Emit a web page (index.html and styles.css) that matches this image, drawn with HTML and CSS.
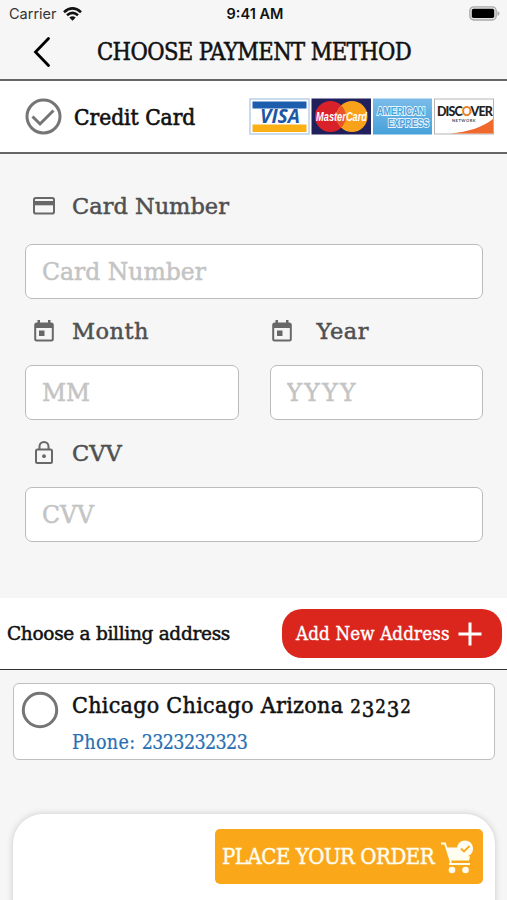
FILE: index.html
```html
<!DOCTYPE html>
<html lang="en">
<head>
<meta charset="utf-8">
<title>Choose Payment Method</title>
<link rel="stylesheet" href="styles.css">
</head>
<body>
<div class="screen">
  <div class="status">
    <div class="carrier"><span>Carrier</span>
      <svg width="19" height="14" viewBox="0 0 19 14" fill="none" stroke="#111" stroke-width="2.6"><path d="M1 5.2Q9.500-2.300 18 5.200M4 8.300Q9.500 3.600 15 8.300"/><path d="M6.300 10.500Q9.500 8 12.700 10.500L9.500 13.700z" fill="#111" stroke="none"/></svg>
    </div>
    <span class="time">9:41 AM</span>
    <svg class="battery" width="31" height="15" viewBox="0 0 31 15"><rect x=".8" y=".8" width="26.400" height="13.200" rx="4" fill="#e4e4e4" stroke="#aaa" stroke-width="1.300"/><rect x="2.800" y="2.800" width="22.400" height="9.200" rx="1.800" fill="#000"/><path d="M28.500 5v5q2-1 2-2.500t-2-2.500z" fill="#aaa"/></svg>
  </div>
  <header class="header">
    <svg class="back" width="18" height="32" viewBox="0 0 18 32" fill="none" stroke="#000" stroke-width="2.800"><path d="M15.500 2.500L2.500 16L15.500 29.500" stroke-linecap="round"/></svg>
    <h1>CHOOSE PAYMENT METHOD</h1>
  </header>
  <section class="method">
    <svg class="check" width="37" height="37" viewBox="0 0 37 37" fill="none" stroke="#757575" stroke-width="3"><circle cx="18.500" cy="18.500" r="16.500"/><path d="M7.500 18.500L15 26L28.500 12.500"/></svg>
    <span class="method-name">Credit Card</span>
    <svg class="cards" width="246" height="38" viewBox="0 0 246 38">
      <rect x="1" y="1" width="59" height="35" fill="#fff" stroke="#b9cfe8" stroke-width="1.500"/>
      <rect x="3.500" y="3.500" width="54" height="7" fill="#1d5dad"/><rect x="3.500" y="26.500" width="54" height="7.500" fill="#fbb116"/>
      <text x="11" y="25" class="visa" textLength="40" lengthAdjust="spacingAndGlyphs">VISA</text>
      <rect x="62.500" y=".5" width="59.500" height="36" fill="#20205c"/>
      <circle cx="81.500" cy="18.500" r="15.500" fill="#d9212a"/><circle cx="103" cy="18.500" r="15.500" fill="#f9a11b"/>
      <path d="M92.300 7.500a15.500 15.500 0 0 1 0 22a15.500 15.500 0 0 1 0-22" fill="#e9552a"/>
      <text x="67" y="23" class="master" textLength="51" lengthAdjust="spacingAndGlyphs">MasterCard</text>
      <defs><linearGradient id="sky" x2="0" y2="1"><stop stop-color="#7abce9"/><stop offset="1" stop-color="#46a1d9"/></linearGradient></defs>
      <rect x="124" y=".5" width="59" height="36" fill="url(#sky)"/>
      <text x="128" y="17" class="amex" textLength="48" lengthAdjust="spacingAndGlyphs">AMERICAN</text>
      <text x="139" y="29" class="amex" textLength="41" lengthAdjust="spacingAndGlyphs">EXPRESS</text>
      <rect x="185.500" y="1" width="59" height="35" fill="#fff" stroke="#b5b5b5"/>
      <path d="M201 35.500Q229 33 244 21V35.500z" fill="#ee692b"/>
      <text x="188" y="18" class="disc">DISC<tspan class="disc-o">O</tspan>VER</text>
      <text x="203" y="23.500" class="network">NETWORK</text>
    </svg>
  </section>
  <main class="form">
    <label class="label first"><svg width="24" height="20" viewBox="0 0 24 20"><rect x="2" y="2" width="20" height="15.500" rx="1.800" fill="none" stroke="#686868" stroke-width="2"/><path d="M2 5h20v4.300H2z" fill="#686868"/></svg><span>Card Number</span></label>
    <input class="field" placeholder="Card Number">
    <div class="cols">
      <div><label class="label"><svg width="22" height="24" viewBox="0 0 22 24"><path d="M2 4h18v5H2zM4.500 1h2.500v4H4.500zM15 1h2.500v4H15zM6 11.500h5.500v5.500H6z" fill="#686868"/><rect x="2.200" y="4.500" width="17.600" height="17" rx="1.500" fill="none" stroke="#686868" stroke-width="2"/></svg><span class="wide">Month</span></label><input class="field mm" placeholder="MM"></div>
      <div><label class="label year"><svg width="22" height="24" viewBox="0 0 22 24"><path d="M2 4h18v5H2zM4.500 1h2.500v4H4.500zM15 1h2.500v4H15zM6 11.500h5.500v5.500H6z" fill="#686868"/><rect x="2.200" y="4.500" width="17.600" height="17" rx="1.500" fill="none" stroke="#686868" stroke-width="2"/></svg><span class="wide">Year</span></label><input class="field yyyy" placeholder="YYYY"></div>
    </div>
    <label class="label cvv"><svg width="20" height="26" viewBox="0 0 20 26" fill="none" stroke="#686868" stroke-width="2"><rect x="2" y="9.500" width="16" height="13.500" rx="1.500"/><path d="M5.500 9.500V6.500a4.500 4.500 0 0 1 9 0V9.500"/><circle cx="10" cy="16.200" r="1.900" fill="#686868" stroke="none"/></svg><span>CVV</span></label>
    <input class="field" placeholder="CVV">
  </main>
  <section class="billing">
    <span class="choose">Choose a billing address</span>
    <button class="add"><span>Add New Address</span><svg width="24" height="24" viewBox="0 0 24 24" stroke="#fff" stroke-width="3"><path d="M12 .5v23M.5 12h23"/></svg></button>
  </section>
  <section class="address">
    <svg width="38" height="38" viewBox="0 0 38 38" fill="none" stroke="#757575" stroke-width="3"><circle cx="19" cy="19" r="16.700"/></svg>
    <div><div class="city">Chicago Chicago Arizona <span class="old"><b>2</b><i>3</i><b>2</b><i>3</i><b>2</b></span></div><div class="phone">Phone: <span>2323232323</span></div></div>
  </section>
  <footer class="sheet">
    <button class="order"><span>PLACE YOUR ORDER</span>
      <svg width="34" height="34" viewBox="0 0 34 34" fill="none" stroke="#fffdf0" stroke-width="1.800"><path d="M1 3.500h4l5.500 17.500q1 3-1.500 3h21"/><path d="M6 7.500h14q0 8 10 9l-1 4H10z" fill="#fffdf0" stroke="none"/><circle cx="12" cy="30" r="3.300" fill="#fffdf0" stroke="none"/><circle cx="25.500" cy="30" r="3.300" fill="#fffdf0" stroke="none"/><circle cx="25" cy="8.500" r="8.100" fill="#fffdf0" stroke="none"/><path d="M21 8.500l3 3l5.500-5.500" stroke="#faa81a"/></svg>
    </button>
  </footer>
</div>
</body>
</html>
```
FILE: styles.css
```css
* { box-sizing: border-box; }
body { margin: 0; }
svg { flex: none; display: block; }
.screen { width: 507px; height: 900px; overflow: hidden; background: #f6f6f6; color: #111; font-family: "DejaVu Serif Condensed", "DejaVu Serif", serif; font-stretch: condensed; display: flex; flex-direction: column; white-space: nowrap; }
.status { height: 27px; flex: none; display: grid; grid-template-columns: 1fr auto 1fr; align-items: center; padding: 0 6px 0 9px; font: 14.500px Inter, sans-serif; }
.carrier { display: flex; gap: 6px; align-items: center; color: #333; }
.time { font-weight: 600; font-size: 14.500px; }
.battery { justify-self: end; margin-right: 1px; }
.header { height: 54px; flex: none; display: flex; align-items: center; padding: 0 0 3px 33px; border-bottom: 2px solid #666; }
h1 { margin: 0 0 0 46px; font-size: 23.500px; font-weight: 400; -webkit-text-stroke: .5px; letter-spacing: -.6px; }
.method { height: 73px; flex: none; display: flex; align-items: center; background: #fff; border-bottom: 2px solid #666; padding-left: 25px; }
.method-name { width: 175px; margin-left: 12px; font-size: 22.500px; -webkit-text-stroke: .6px; }
.visa { font: italic 700 20px "Open Sans"; fill: #1d57a5; }
.master { font: italic 700 12px "Liberation Sans"; fill: #fff; }
.amex { font: 700 11.500px "Liberation Sans"; fill: #4ba1d8; stroke: #e6f5ff; stroke-width: 2px; paint-order: stroke; }
.disc { font: 900 12.500px Lato; letter-spacing: -.9px; fill: #222; }
.disc-o { fill: #ee7b20; }
.network { font: 700 4px Lato; fill: #444; letter-spacing: .5px; }
.form { height: 444px; flex: none; padding: 36px 24px 0 25px; font-family: "DejaVu Serif", serif; font-stretch: normal; }
.label { height: 32px; display: flex; align-items: center; padding-left: 7px; font-size: 22.500px; color: #505050; -webkit-text-stroke: .5px; }
.label svg + span { margin-left: 16px; }
.label:not(.first) svg { margin-left: 1px; }
.label:not(.first) svg + span { margin-left: 17px; }
.label .wide { letter-spacing: .5px; }
.field { display: block; width: 100%; height: 55px; border: 1.500px solid #bbb; border-radius: 7px; background: #fff; padding: 0 16px; font: inherit; font-size: 23.500px; }
.field::placeholder { color: #c4c4c4; opacity: 1; -webkit-text-stroke: .5px; }
.yyyy::placeholder { letter-spacing: 2.300px; }
.first + .field { margin-top: 22px; }
.cols { display: grid; grid-template-columns: 1fr 1fr; gap: 31px; margin-top: 16px; }
.cols .field { margin-top: 18px; }
.label.year { padding-left: 0; }
.label.year svg + span { margin-left: 24px; }
.label.cvv { margin-top: 17px; }
.label.cvv svg { margin-left: 2px; }
.label.cvv svg + span { margin-left: 18px; }
.cvv + .field { margin-top: 18px; }
.billing { height: 72px; flex: none; background: #fff; border-bottom: 1.500px solid #333; display: flex; align-items: center; justify-content: space-between; padding: 0 5px 0 7px; }
.choose { font-family: "DejaVu Serif", serif; font-stretch: normal; font-size: 18.500px; letter-spacing: -.3px; -webkit-text-stroke: .5px; }
.add { width: 220px; height: 49px; border: 0; border-radius: 20px; background: #db261d; color: #fff; font: inherit; font-size: 18.500px; letter-spacing: .2px; -webkit-text-stroke: .4px; display: flex; align-items: center; padding: 0 0 0 14px; }
.add span { width: 162px; text-align: left; }
.address { flex: none; width: 482px; height: 77px; margin: 13px 0 0 13px; border: 1.500px solid #bfbfbf; border-radius: 6px; background: #fff; display: flex; padding: 7px; }
.address > div { margin-left: 13px; }
.city { font-size: 23px; line-height: 28px; letter-spacing: .3px; -webkit-text-stroke: .5px; }
.old { letter-spacing: .9px; }
.old b, .old i { font-weight: 400; font-style: normal; }
.old b { font-size: 18.500px; }
.old i { font-size: 22px; line-height: 1; position: relative; top: 4px; }
.phone { font-size: 19.500px; line-height: 24px; margin-top: 10px; letter-spacing: .4px; color: #2870b3; -webkit-text-stroke: .2px; }
.phone span { letter-spacing: -.6px; }
.sheet { flex: none; width: 482px; height: 120px; margin: 54px 0 0 13px; border-radius: 30px 30px 0 0; background: #fff; box-shadow: 0 0 7px rgba(0,0,0,.18); display: flex; justify-content: flex-end; padding: 15px 12px 0 0; }
.order { width: 268px; height: 55px; border: 0; border-radius: 5px; background: #faa81a; color: #fffdf0; font: inherit; font-size: 22px; letter-spacing: -.5px; display: flex; align-items: center; padding: 0 0 0 7px; -webkit-text-stroke: .4px; }
.order span { width: 218px; text-align: left; }
```
